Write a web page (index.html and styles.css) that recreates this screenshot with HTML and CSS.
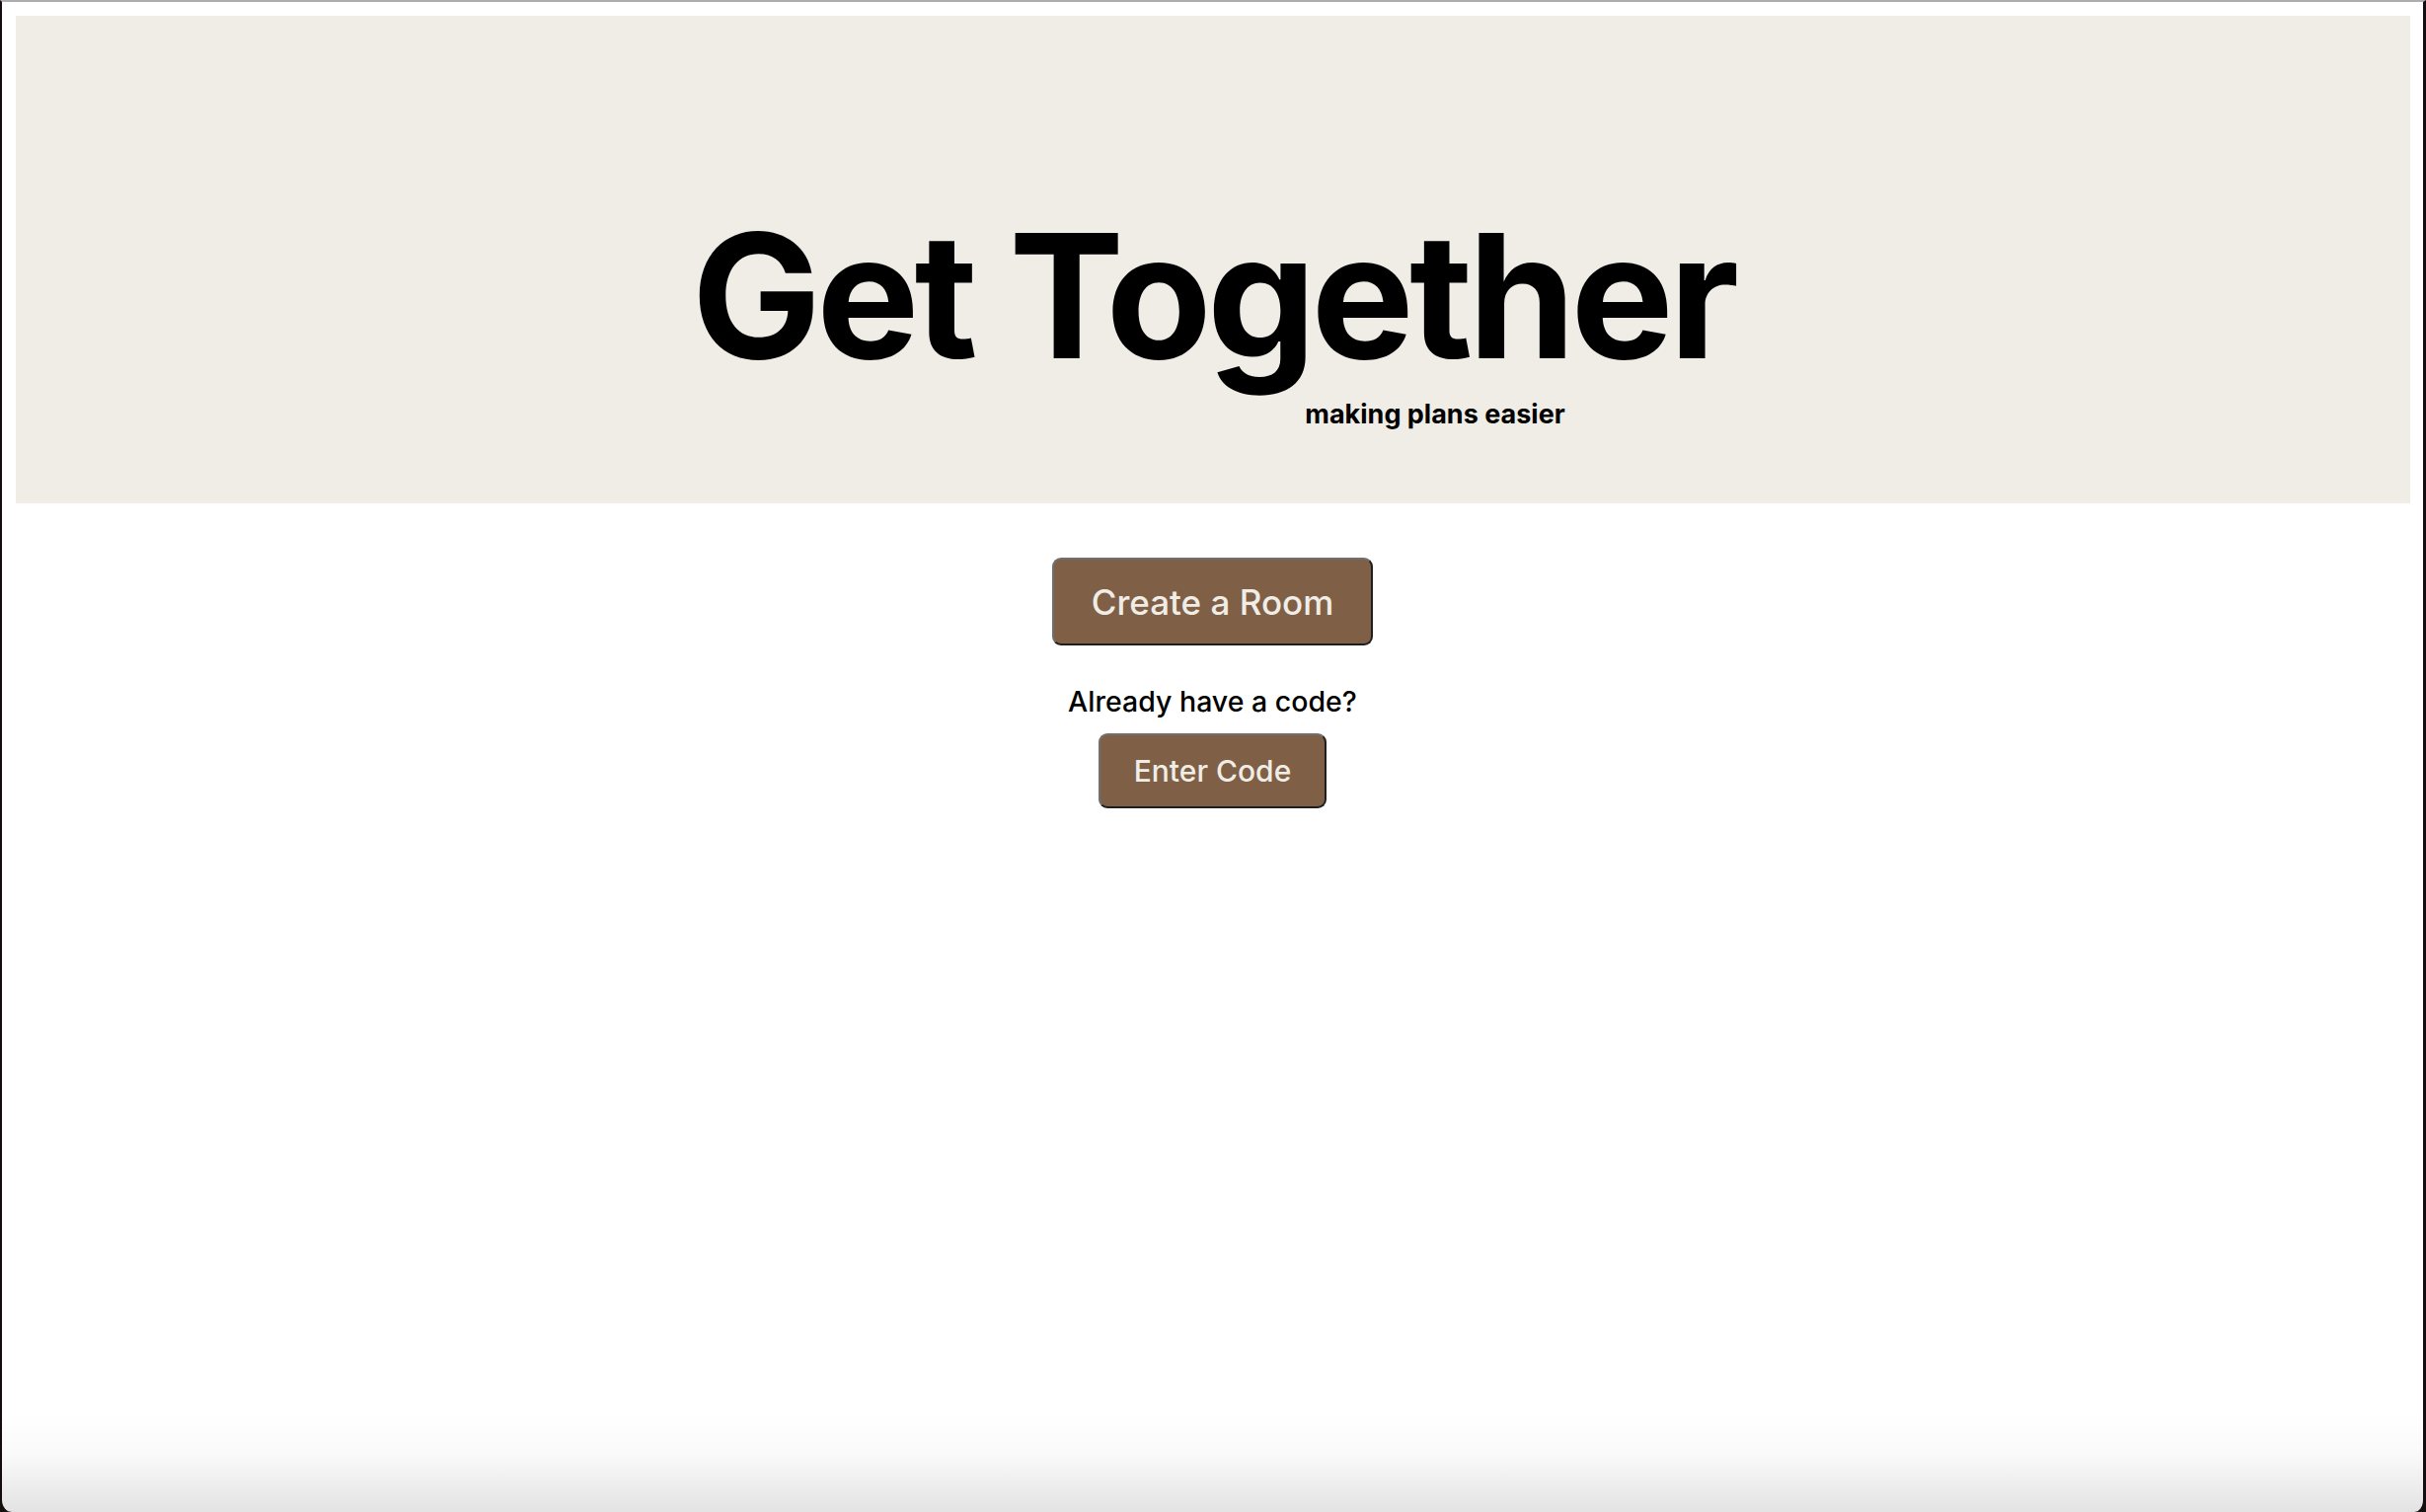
FILE: index.html
```html
<!DOCTYPE html>
<html lang="en">
<head>
<meta charset="utf-8">
<title>Get Together</title>
<link rel="stylesheet" href="styles.css">
</head>
<body>
<div class="frame">
  <header class="hero">
    <h1 class="title">Get Together</h1>
    <p class="tagline">making plans easier</p>
  </header>
  <main class="actions">
    <button class="btn btn-create" type="button">Create a Room</button>
    <p class="prompt">Already have a code?</p>
    <button class="btn btn-enter" type="button">Enter Code</button>
  </main>
</div>
</body>
</html>
```
FILE: styles.css
```css
html, body {
  margin: 0;
  padding: 0;
  height: 100%;
  background: #16100f;
}

.frame {
  box-sizing: border-box;
  height: 1532px;
  border-top: 2px solid #adacb1;
  border-left: 2px solid #140c10;
  border-right: 3px solid #140c10;
  border-radius: 0 0 12px 12px;
  background: linear-gradient(to bottom, #ffffff 0, #ffffff 1430px, #fafafa 1470px, #e2e2e2 1532px);
  display: flex;
  flex-direction: column;
  overflow: hidden;
}

.hero {
  margin: 14px 13px 0 14px;
  height: 494px;
  box-sizing: border-box;
  padding-top: 196px;
  background: #f0ede6;
  display: flex;
  flex-direction: column;
  align-items: center;
}

.title {
  margin: 0;
  font-family: Inter, "Liberation Sans", sans-serif;
  font-weight: 700;
  font-size: 175px;
  line-height: 1;
  letter-spacing: -0.028em;
  color: #000;
}

.tagline {
  margin: 17px 0 0 450px;
  font-family: Inter, "Liberation Sans", sans-serif;
  font-weight: 700;
  font-size: 27px;
  line-height: 1.2;
  color: #000;
}

.actions {
  display: flex;
  flex-direction: column;
  align-items: center;
  padding-top: 55px;
}

.btn {
  box-sizing: border-box;
  display: flex;
  align-items: center;
  justify-content: center;
  background: #7f5f45;
  color: #f0ede6;
  font-family: Inter, "Noto Sans", sans-serif;
  font-weight: 500;
  border-style: solid;
  border-width: 2px;
  border-color: #6f6f6f #1e1e1e #1e1e1e #6f6f6f;
  border-radius: 9px;
  cursor: pointer;
}

.btn-create {
  height: 89px;
  padding: 0 38px;
  font-size: 35px;
}

.btn-enter {
  height: 76px;
  padding: 0 34px;
  font-size: 30px;
}

.prompt {
  margin: 40px 0 15px;
  font-family: Inter, "Noto Sans", sans-serif;
  font-weight: 500;
  font-size: 28.5px;
  line-height: 1.2;
  color: #000;
}
```
